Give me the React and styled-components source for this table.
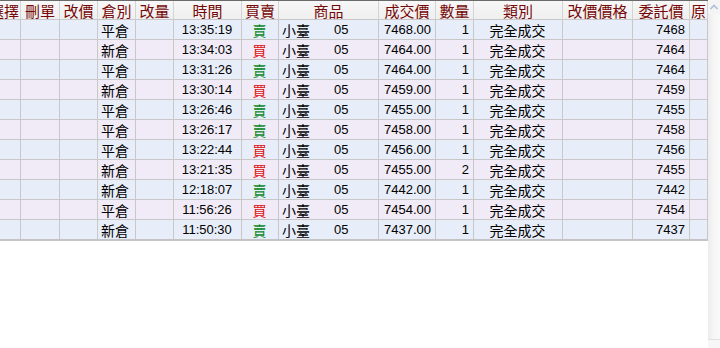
import React from 'react';
import styled, { createGlobalStyle } from 'styled-components';

const GlobalStyle = createGlobalStyle`
  html, body { margin: 0; padding: 0; background: #fff; }
  body { font-family: "Liberation Sans", "Noto Sans CJK TC", sans-serif; }
  * { box-sizing: border-box; }
`;

const columns = [
  { key: 'sel', title: '選擇', w: 21 },
  { key: 'del', title: '刪單', w: 39 },
  { key: 'chg', title: '改價', w: 38 },
  { key: 'pos', title: '倉別', w: 38 },
  { key: 'qchg', title: '改量', w: 38 },
  { key: 'time', title: '時間', w: 68 },
  { key: 'side', title: '買賣', w: 37 },
  { key: 'prod', title: '商品', w: 100 },
  { key: 'price', title: '成交價', w: 57 },
  { key: 'qty', title: '數量', w: 38 },
  { key: 'type', title: '類別', w: 89 },
  { key: 'newp', title: '改價價格', w: 70 },
  { key: 'ord', title: '委託價', w: 57 },
  { key: 'orig', title: '原', w: 18 },
];

const trades = [
  ['平倉', '13:35:19', '賣', '7468.00', 1, '7468'],
  ['新倉', '13:34:03', '買', '7464.00', 1, '7464'],
  ['平倉', '13:31:26', '賣', '7464.00', 1, '7464'],
  ['新倉', '13:30:14', '買', '7459.00', 1, '7459'],
  ['平倉', '13:26:46', '賣', '7455.00', 1, '7455'],
  ['平倉', '13:26:17', '賣', '7458.00', 1, '7458'],
  ['平倉', '13:22:44', '買', '7456.00', 1, '7456'],
  ['新倉', '13:21:35', '買', '7455.00', 2, '7455'],
  ['新倉', '12:18:07', '賣', '7442.00', 1, '7442'],
  ['平倉', '11:56:26', '買', '7454.00', 1, '7454'],
  ['新倉', '11:50:30', '賣', '7437.00', 1, '7437'],
];

export default function App() {
  const template = columns.map(c => `${c.w}px`).join(' ');
  return (
    <>
      <GlobalStyle />
      <Screen>
        <Viewport>
          <Grid style={{ gridTemplateColumns: template }}>
            {columns.map((c, i) => (
              <HeadCell key={c.key} $first={i === 0}>
                <span>{c.title}</span>
              </HeadCell>
            ))}
            {trades.map(([pos, time, side, price, qty, ord], r) => {
              const odd = r % 2 === 1;
              return (
                <React.Fragment key={r}>
                  <Cell $odd={odd} />
                  <Cell $odd={odd} />
                  <Cell $odd={odd} />
                  <Cell $odd={odd} $align="left"><Cjk>{pos}</Cjk></Cell>
                  <Cell $odd={odd} />
                  <Cell $odd={odd} $align="center">{time}</Cell>
                  <Cell $odd={odd} $align="center">
                    <Side $buy={side === '買'}>{side}</Side>
                  </Cell>
                  <Cell $odd={odd} $align="left">
                    <Cjk>小臺</Cjk>
                    <Month>05</Month>
                  </Cell>
                  <Cell $odd={odd} $align="right">{price}</Cell>
                  <Cell $odd={odd} $align="right">{qty}</Cell>
                  <Cell $odd={odd} $align="center"><Cjk>完全成交</Cjk></Cell>
                  <Cell $odd={odd} />
                  <Cell $odd={odd} $align="right">{ord}</Cell>
                  <Cell $odd={odd} />
                </React.Fragment>
              );
            })}
          </Grid>
          <BottomEdge />
        </Viewport>
        <ScrollBar>
          <ArrowButton>
            <svg width="10" height="8" viewBox="0 0 10 8">
              <path d="M1.5 6 L5 2.5 L8.5 6" fill="none" stroke="#a9c0d8" strokeWidth="1.6" />
            </svg>
          </ArrowButton>
          <Track />
          <CornerButton />
        </ScrollBar>
      </Screen>
    </>
  );
}

const Screen = styled.div`
  width: 720px;
  height: 348px;
  display: flex;
  overflow: hidden;
  background: #fff;
`;

const Viewport = styled.div`
  width: 708px;
  display: flex;
  flex-direction: column;
  overflow: hidden;
  border-top: 1px solid #6a6a6a;
`;

const Grid = styled.div`
  display: grid;
  grid-auto-rows: 20px;
  grid-template-rows: 19px;
`;

const HeadCell = styled.div`
  display: flex;
  align-items: center;
  justify-content: ${p => (p.$first ? 'flex-end' : 'center')};
  overflow: ${p => (p.$first ? 'hidden' : 'visible')};
  white-space: nowrap;
  background: linear-gradient(#f7f7f7, #efefef);
  border-right: 1px solid #d4d4d4;
  border-bottom: 1px solid #c8c8c8;
  color: #760808;
  font-family: "Noto Sans CJK TC", sans-serif;
  font-size: 15px;
  line-height: 1;
  padding: 0 1px;
  span { flex-shrink: 0; }
`;

const Cell = styled.div`
  display: flex;
  align-items: center;
  justify-content: ${p =>
    p.$align === 'right' ? 'flex-end' : p.$align === 'center' ? 'center' : 'flex-start'};
  padding: 0 4px 0 3px;
  background: ${p => (p.$odd ? '#f0ebf6' : '#e8eef9')};
  border-right: 1px solid #c8c8c8;
  border-bottom: 1px solid #c8c8c8;
  color: #000;
  font-size: 13px;
  line-height: 1;
  white-space: nowrap;
`;

const Cjk = styled.span`
  font-family: "Noto Sans CJK TC", sans-serif;
  font-size: 14px;
`;

const Month = styled.span`
  margin-left: 24px;
`;

const Side = styled.span`
  font-family: "Noto Sans CJK TC", sans-serif;
  font-size: 14px;
  color: ${p => (p.$buy ? '#e01010' : '#0f8a2a')};
`;

const BottomEdge = styled.div`
  height: 2px;
  margin-top: -1px;
  background: #c4c4c4;
`;

const ScrollBar = styled.div`
  width: 12px;
  display: flex;
  flex-direction: column;
  background: linear-gradient(90deg, #ececec, #f6f6f6 50%, #fafafa);
`;

const ArrowButton = styled.div`
  height: 14px;
  display: flex;
  align-items: center;
  justify-content: center;
  background: #f4f4f4;
`;

const Track = styled.div`
  flex: 1;
`;

const CornerButton = styled.div`
  height: 9px;
  border-top: 1px solid #e2e2e2;
  background: #f7f7f7;
`;
